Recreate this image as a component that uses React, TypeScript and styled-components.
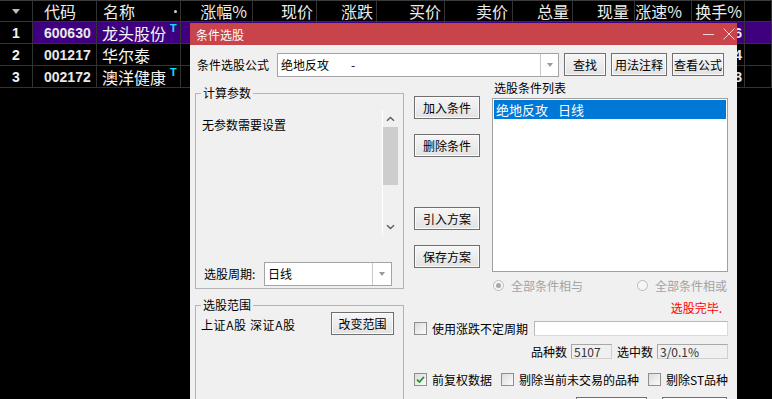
import React from "react";
import styled, { createGlobalStyle } from "styled-components";

const CJK = `"Noto Sans CJK SC", "Liberation Sans", sans-serif`;

const GlobalStyle = createGlobalStyle`
  html, body {
    margin: 0;
    padding: 0;
    background: #000;
  }
  body {
    font-family: ${CJK};
  }
`;

const COLS = [33, 64, 84, 72, 64, 60, 68, 68, 60, 62, 57, 53, 27];

const Screen = styled.div`
  position: relative;
  width: 772px;
  height: 399px;
  overflow: hidden;
  background: #000;
`;

/* ---------- quote table behind the dialog ---------- */

const Table = styled.div`
  display: grid;
  grid-template-columns: ${COLS.map((c) => c + "px").join(" ")};
  grid-auto-rows: 22px;
`;

const Cell = styled.div<{ $align?: "left" | "right" | "center"; $pad?: number; $hl?: boolean; $head?: boolean }>`
  box-sizing: border-box;
  display: flex;
  align-items: center;
  justify-content: ${(p) => (p.$align === "right" ? "flex-end" : p.$align === "center" ? "center" : "flex-start")};
  padding: 0 ${(p) => (p.$align === "right" ? p.$pad ?? 3 : 0)}px 0 ${(p) => (p.$align === "left" ? p.$pad ?? 6 : 0)}px;
  border-right: 1px solid #333;
  border-bottom: 1px solid #333;
  border-top: ${(p) => (p.$head ? "1px solid #3c3c3c" : "none")};
  background: ${(p) => (p.$hl ? "#3f0080" : "#000")};
  color: #ececec;
  font-size: 16px;
  white-space: nowrap;
  overflow: hidden;
`;

const SortMark = styled.span`
  width: 0;
  height: 0;
  border-left: 4px solid transparent;
  border-right: 4px solid transparent;
  border-top: 5px solid #bdbdbd;
`;

const Dot = styled.span`
  margin-left: auto;
  margin-right: 3px;
  width: 3px;
  height: 3px;
  border-radius: 50%;
  background: #d0d0d0;
`;

const RowNo = styled.span`
  font-family: "Liberation Sans", sans-serif;
  font-weight: bold;
  font-size: 14px;
  color: #f2f2f2;
`;

const Code = styled.span`
  font-family: "Liberation Sans", sans-serif;
  font-weight: bold;
  font-size: 14px;
  color: #e8e8e8;
`;

const Name = styled.span`
  font-size: 16px;
  color: #f4f4f4;
`;

const TMark = styled.sup`
  align-self: flex-start;
  margin: 1px 0 0 4px;
  font-family: "Liberation Sans", sans-serif;
  font-weight: bold;
  font-size: 11px;
  line-height: 11px;
  color: #00e5ff;
`;

const Value = styled.span`
  font-family: "Liberation Sans", sans-serif;
  font-weight: bold;
  font-size: 14px;
  color: #e8e8e8;
`;

/* ---------- dialog ---------- */

const Dialog = styled.div`
  position: absolute;
  left: 190px;
  top: 23px;
  width: 547px;
  height: 400px;
  background: #f0f0f0;
  font-family: ${CJK};
  font-size: 12px;
  color: #000;
`;

const TitleBar = styled.div`
  height: 22px;
  background: #c9434a;
  display: flex;
  align-items: center;
  justify-content: space-between;
  padding: 0 2px 0 6px;
  color: #fff;
  font-size: 12px;
`;

const TitleTools = styled.div`
  display: flex;
  align-items: center;
  gap: 9px;
`;

const Body = styled.div`
  padding: 8px 0 0 5px;
`;

const FormulaRow = styled.div`
  display: flex;
  align-items: flex-start;
  height: 24px;
`;

const FieldLabel = styled.span<{ $w: number; $pl?: number }>`
  width: ${(p) => p.$w}px;
  padding-left: ${(p) => p.$pl ?? 0}px;
  box-sizing: border-box;
  line-height: 24px;
  flex-shrink: 0;
`;

const Combo = styled.div<{ $w: number }>`
  width: ${(p) => p.$w}px;
  height: 24px;
  box-sizing: border-box;
  border: 1px solid #a3a3a3;
  background: #fff;
  display: flex;
  flex-shrink: 0;
`;

const ComboText = styled.div`
  flex: 1;
  padding-left: 3px;
  line-height: 22px;
  display: flex;
`;

const Dash = styled.span`
  margin-left: 22px;
`;

const ComboArrow = styled.div<{ $w: number }>`
  width: ${(p) => p.$w}px;
  border-left: 1px solid #c9c9c9;
  display: flex;
  align-items: center;
  justify-content: center;

  &::after {
    content: "";
    border-left: 3.5px solid transparent;
    border-right: 3.5px solid transparent;
    border-top: 4px solid #9a9a9a;
  }
`;

const Btn = styled.button<{ $w: number; $ml?: number; $mt?: number }>`
  width: ${(p) => p.$w}px;
  height: 23px;
  margin: ${(p) => p.$mt ?? 0}px 0 0 ${(p) => p.$ml ?? 0}px;
  padding: 0;
  flex-shrink: 0;
  box-sizing: border-box;
  border: 1px solid #707070;
  border-radius: 0;
  background: linear-gradient(#f6f6f6, #e2e2e2);
  box-shadow: inset 0 0 0 1px #fbfbfb;
  font-family: ${CJK};
  font-size: 12px;
  color: #000;
  overflow: hidden;
`;

const Main = styled.div`
  display: flex;
  gap: 10px;
  margin-top: 4px;
`;

const LeftCol = styled.div`
  width: 209px;
  display: flex;
  flex-direction: column;
`;

const Group = styled.fieldset<{ $mt?: number; $pb?: number; $grow?: boolean }>`
  margin: ${(p) => p.$mt ?? 0}px 0 0 0;
  padding: 0 5px ${(p) => p.$pb ?? 2}px 5px;
  border: 1px solid #b4b4b4;
  min-width: 0;
  box-sizing: border-box;
  flex: ${(p) => (p.$grow ? "1" : "none")};
`;

const Legend = styled.legend`
  padding: 0 2px;
  font-size: 12px;
  line-height: 16px;
`;

const ParamBox = styled.div`
  margin-top: 9px;
  height: 125px;
  display: flex;
`;

const ParamText = styled.div`
  flex: 1;
  padding: 7px 1px;
  line-height: 16px;
`;

const ScrollBar = styled.div`
  width: 16px;
  box-sizing: border-box;
  border-left: 1px solid #fff;
  display: flex;
  flex-direction: column;
`;

const ScrollArrow = styled.div`
  height: 17px;
  display: flex;
  align-items: center;
  justify-content: center;
`;

const Thumb = styled.div`
  height: 58px;
  background: #cdcdcd;
`;

const ScrollGap = styled.div`
  flex: 1;
`;

const PeriodRow = styled.div`
  margin-top: 27px;
  display: flex;
  align-items: center;
  height: 24px;
`;

const RangeRow = styled.div`
  margin-top: -1px;
  height: 22px;
  display: flex;
  align-items: center;
  justify-content: space-between;
  padding-right: 4px;
`;

const RangeText = styled.span`
  padding-top: 3px;
  letter-spacing: 0.6px;
`;

const RightCol = styled.div`
  width: 314px;
  display: flex;
  flex-direction: column;
`;

const TopArea = styled.div`
  display: flex;
  gap: 12px;
`;

const ButtonCol = styled.div`
  width: 66px;
  display: flex;
  flex-direction: column;
  padding-top: 15px;
  gap: 15px;
`;

const ListCol = styled.div`
  width: 236px;
  display: flex;
  flex-direction: column;
`;

const ListLabel = styled.div`
  height: 17px;
  line-height: 14px;
  padding-left: 2px;
`;

const ListBox = styled.div`
  height: 174px;
  box-sizing: border-box;
  border: 1px solid #a0a0a0;
  background: #fff;
  padding: 1px;
`;

const ListItem = styled.div<{ $selected?: boolean }>`
  height: 19px;
  line-height: 19px;
  padding-left: 2px;
  font-size: 13px;
  background: ${(p) => (p.$selected ? "#0078d7" : "transparent")};
  color: ${(p) => (p.$selected ? "#fff" : "#000")};
  display: flex;
  gap: 10px;
`;

const RadioRow = styled.div`
  margin-top: 5px;
  height: 16px;
  display: flex;
  padding-left: 1px;
`;

const RadioItem = styled.label<{ $w?: number }>`
  width: ${(p) => (p.$w ? p.$w + "px" : "auto")};
  display: flex;
  align-items: center;
  gap: 7px;
  color: #a3a3a3;
`;

const Radio = styled.span<{ $on?: boolean }>`
  width: 11px;
  height: 11px;
  box-sizing: border-box;
  border-radius: 50%;
  border: 1px solid #bcbcbc;
  background: #f6f6f6;
  display: flex;
  align-items: center;
  justify-content: center;

  &::after {
    content: "";
    width: 5px;
    height: 5px;
    border-radius: 50%;
    background: ${(p) => (p.$on ? "#a8a8a8" : "transparent")};
  }
`;

const Status = styled.div`
  margin-top: 7px;
  height: 16px;
  line-height: 16px;
  text-align: right;
  padding-right: 6px;
  color: #ff0000;
`;

const Line = styled.div<{ $mt: number; $h: number; $end?: boolean }>`
  margin-top: ${(p) => p.$mt}px;
  height: ${(p) => p.$h}px;
  display: flex;
  align-items: center;
  justify-content: ${(p) => (p.$end ? "flex-end" : "flex-start")};
`;

const Box = styled.span<{ $ml?: number }>`
  width: 13px;
  height: 13px;
  margin-left: ${(p) => p.$ml ?? 0}px;
  box-sizing: border-box;
  border: 1px solid #8e8f8f;
  background: linear-gradient(135deg, #dcdcdc, #fbfbfb);
  display: flex;
  align-items: center;
  justify-content: center;
  flex-shrink: 0;
`;

const BoxLabel = styled.span`
  margin-left: 5px;
  white-space: nowrap;
`;

const Edit = styled.div`
  margin-left: auto;
  width: 194px;
  height: 15px;
  box-sizing: border-box;
  background: #fff;
  border: 1px solid #dadada;
  border-top-color: #b8b8b8;
  border-left-color: #b8b8b8;
`;

const ReadBox = styled.span<{ $w: number }>`
  width: ${(p) => p.$w}px;
  height: 15px;
  margin: 0 5px 0 4px;
  box-sizing: border-box;
  border: 1px solid #d0d0d0;
  border-top-color: #a8a8a8;
  border-left-color: #a8a8a8;
  padding-left: 2px;
  line-height: 13px;
  color: #333;

  &:last-child {
    margin-right: 0;
  }
`;

const BottomRow = styled.div`
  margin-top: 11px;
  display: flex;
  padding-left: 162px;
  gap: 15px;
`;

const rows = [
  { no: "1", code: "600630", name: "龙头股份", t: true, turn: "2.36", hl: true },
  { no: "2", code: "001217", name: "华尔泰", t: false, turn: "0.84", hl: false },
  { no: "3", code: "002172", name: "澳洋健康", t: true, turn: "1.28", hl: false },
];

const heads: { text: string; pad: number }[] = [
  { text: "涨幅%", pad: 5 },
  { text: "现价", pad: 3 },
  { text: "涨跌", pad: 3 },
  { text: "买价", pad: 3 },
  { text: "卖价", pad: 4 },
  { text: "总量", pad: 3 },
  { text: "现量", pad: 5 },
  { text: "涨速%", pad: 9 },
  { text: "换手%", pad: 2 },
];

const Chevron = ({ down }: { down?: boolean }) => (
  <svg width="9" height="6" viewBox="0 0 9 6">
    <path
      d={down ? "M1 1.2 L4.5 4.6 L8 1.2" : "M1 4.8 L4.5 1.4 L8 4.8"}
      fill="none"
      stroke="#5c5c5c"
      strokeWidth="1.4"
    />
  </svg>
);

const Check = () => (
  <svg width="11" height="11" viewBox="0 0 11 11">
    <path d="M2 5.6 L4.4 8 L9 2.8" fill="none" stroke="#1e9e28" strokeWidth="1.8" />
  </svg>
);

const App = () => {
  return (
    <Screen>
      <GlobalStyle />
      <Table>
        <Cell $head $align="center">
          <SortMark />
        </Cell>
        <Cell $head $align="left" $pad={11}>
          代码
        </Cell>
        <Cell $head $align="left" $pad={6}>
          名称
          <Dot />
        </Cell>
        {heads.map((h) => (
          <Cell key={h.text} $head $align="right" $pad={h.pad}>
            {h.text}
          </Cell>
        ))}
        <Cell $head />

        {rows.map((r) => (
          <React.Fragment key={r.code}>
            <Cell $align="center">
              <RowNo>{r.no}</RowNo>
            </Cell>
            <Cell $align="left" $pad={11} $hl={r.hl}>
              <Code>{r.code}</Code>
            </Cell>
            <Cell $align="left" $pad={5} $hl={r.hl}>
              <Name>{r.name}</Name>
              {r.t && <TMark>T</TMark>}
            </Cell>
            {heads.map((h, i) => (
              <Cell key={h.text} $align="right" $pad={h.pad} $hl={r.hl}>
                {i === heads.length - 1 && <Value>{r.turn}</Value>}
              </Cell>
            ))}
            <Cell $hl={r.hl} />
          </React.Fragment>
        ))}
      </Table>

      <Dialog>
        <TitleBar>
          <span>条件选股</span>
          <TitleTools>
            <svg width="11" height="11" viewBox="0 0 11 11">
              <path d="M0 5.5 H11" stroke="#f4d2d4" strokeWidth="1" />
            </svg>
            <svg width="12" height="12" viewBox="0 0 12 12">
              <path d="M0.5 0.5 L11.5 11.5 M11.5 0.5 L0.5 11.5" stroke="#f4d2d4" strokeWidth="1" />
            </svg>
          </TitleTools>
        </TitleBar>

        <Body>
          <FormulaRow>
            <FieldLabel $w={82} $pl={2}>
              条件选股公式
            </FieldLabel>
            <Combo $w={282}>
              <ComboText>
                <span>绝地反攻</span>
                <Dash>-</Dash>
              </ComboText>
              <ComboArrow $w={17} />
            </Combo>
            <Btn $w={42} $ml={5}>
              查找
            </Btn>
            <Btn $w={56} $ml={5}>
              用法注释
            </Btn>
            <Btn $w={52} $ml={5}>
              查看公式
            </Btn>
          </FormulaRow>

          <Main>
            <LeftCol>
              <Group $mt={4}>
                <Legend>计算参数</Legend>
                <ParamBox>
                  <ParamText>无参数需要设置</ParamText>
                  <ScrollBar>
                    <ScrollArrow>
                      <Chevron />
                    </ScrollArrow>
                    <Thumb />
                    <ScrollGap />
                    <ScrollArrow>
                      <Chevron down />
                    </ScrollArrow>
                  </ScrollBar>
                </ParamBox>
                <PeriodRow>
                  <FieldLabel $w={63} $pl={3}>
                    选股周期:
                  </FieldLabel>
                  <Combo $w={128}>
                    <ComboText>日线</ComboText>
                    <ComboArrow $w={18} />
                  </Combo>
                </PeriodRow>
              </Group>

              <Group $mt={8} $grow>
                <Legend>选股范围</Legend>
                <RangeRow>
                  <RangeText>上证A股 深证A股</RangeText>
                  <Btn $w={63}>改变范围</Btn>
                </RangeRow>
              </Group>
            </LeftCol>

            <RightCol>
              <TopArea>
                <ButtonCol>
                  <Btn $w={66}>加入条件</Btn>
                  <Btn $w={66}>删除条件</Btn>
                  <Btn $w={66} $mt={35}>
                    引入方案
                  </Btn>
                  <Btn $w={66}>保存方案</Btn>
                </ButtonCol>
                <ListCol>
                  <ListLabel>选股条件列表</ListLabel>
                  <ListBox>
                    <ListItem $selected>
                      <span>绝地反攻</span>
                      <span>日线</span>
                    </ListItem>
                  </ListBox>
                  <RadioRow>
                    <RadioItem $w={144}>
                      <Radio $on />
                      全部条件相与
                    </RadioItem>
                    <RadioItem>
                      <Radio />
                      全部条件相或
                    </RadioItem>
                  </RadioRow>
                  <Status>选股完毕.</Status>
                </ListCol>
              </TopArea>

              <Line $mt={5} $h={15}>
                <Box />
                <BoxLabel>使用涨跌不定周期</BoxLabel>
                <Edit />
              </Line>

              <Line $mt={8} $h={15} $end>
                品种数
                <ReadBox $w={41}>5107</ReadBox>
                选中数
                <ReadBox $w={71}>3/0.1%</ReadBox>
              </Line>

              <Line $mt={13} $h={14}>
                <Box>
                  <Check />
                </Box>
                <BoxLabel>前复权数据</BoxLabel>
                <Box $ml={9} />
                <BoxLabel>剔除当前未交易的品种</BoxLabel>
                <Box $ml={9} />
                <BoxLabel>剔除ST品种</BoxLabel>
              </Line>

              <BottomRow>
                <Btn $w={71} />
                <Btn $w={65} />
              </BottomRow>
            </RightCol>
          </Main>
        </Body>
      </Dialog>
    </Screen>
  );
};

export default App;
